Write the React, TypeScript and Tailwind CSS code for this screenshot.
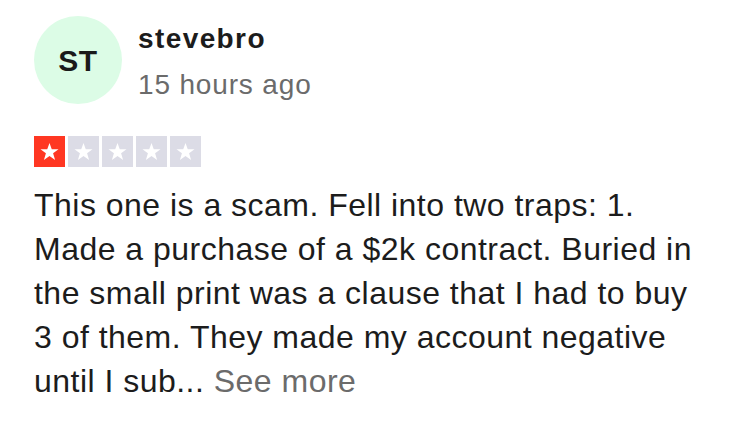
const font = { fontFamily: '"Liberation Sans", Arial, Helvetica, sans-serif' };

function StarBox({ filled }: { filled: boolean }) {
  return (
    <span
      className={
        "flex size-[31px] items-center justify-center " +
        (filled ? "bg-[#ff3722]" : "bg-[#dcdce6]")
      }
    >
      <svg viewBox="0 0 24 24" className="size-[21px]" aria-hidden="true">
        <path
          d="M12 2.2l2.6 7.3h7.7l-6.2 4.6 2.3 7.5L12 17l-6.4 4.6 2.3-7.5-6.2-4.6h7.7z"
          fill="#ffffff"
        />
      </svg>
    </span>
  );
}

export default function App() {
  return (
    <div className="h-[428px] w-[752px] bg-white pl-[34px] pt-[16px] text-[#1c1c1c]" style={font}>
      <div className="flex items-start">
        <div className="flex size-[88px] shrink-0 items-center justify-center rounded-full bg-[#dcfce6]">
          <span className="text-[30px] font-bold tracking-[0.02em] text-[#1a1a1a]">ST</span>
        </div>
        <div className="ml-[16px] mt-[5px] flex flex-col">
          <span className="text-[28px] font-bold leading-[36px] tracking-[0.05em]">stevebro</span>
          <span className="mt-[10px] text-[28px] leading-[36px] tracking-[0.03em] text-[#6b6b6b]">
            15 hours ago
          </span>
        </div>
      </div>

      <div className="mt-[32px] flex gap-[3px]">
        {[0, 1, 2, 3, 4].map((i) => (
          <StarBox key={i} filled={i === 0} />
        ))}
      </div>

      <p className="mt-[16px] w-[672px] text-[32px] leading-[44px] tracking-[0.015em]">
        This one is a scam. Fell into two traps: 1. Made a purchase of a $2k contract. Buried in the
        small print was a clause that I had to buy 3 of them. They made my account negative until I
        sub...{" "}
        <span className="text-[#6b6b6b]">See more</span>
      </p>
    </div>
  );
}
